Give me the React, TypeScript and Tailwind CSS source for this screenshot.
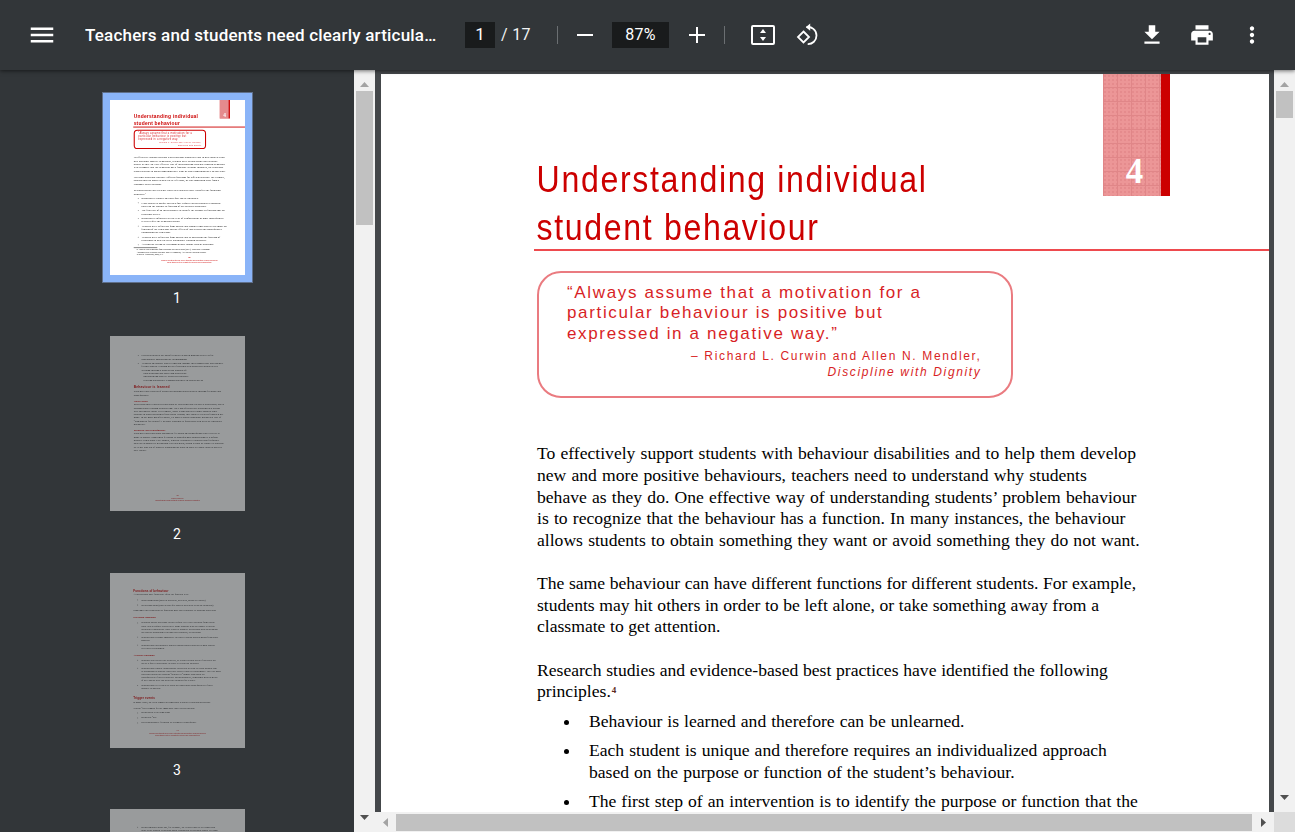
import React from "react";

const Ic = ({ d, cls }: { d: string; cls: string }) => (
  <svg viewBox="0 0 24 24" className={cls} fill="currentColor"><path d={d} /></svg>
);

const Bullets = ({ items, itemCls = "mb-[7.6px]" }: { items: React.ReactNode[]; itemCls?: string }) => (
  <ul>
    {items.map((t, i) => (
      <li key={i} className={`flex ${itemCls}`}>
        <span className="w-[52px] shrink-0 pl-[27px] pt-[9px]"><span className="block w-[5px] h-[5px] rounded-full bg-black" /></span>
        <span>{t}</span>
      </li>
    ))}
  </ul>
);

const Footer = ({ n, a, b }: { n: string; a: string; b: string }) => (
  <div className="text-center font-['Liberation_Sans',sans-serif] text-[#cc0000]">
    <div className="text-[16px] font-['Liberation_Serif',serif] font-bold leading-[20px]">{n}</div>
    <div className="text-[10px] leading-[13px] mt-[4px]">{a}</div>
    <div className="text-[10px] leading-[13px]">{b}</div>
  </div>
);

function PageOne({ thumb }: { thumb?: boolean }) {
  return (
    <div className="w-[888px] h-[1151px] bg-white font-['Liberation_Serif',serif] text-black overflow-hidden">
      <div className="flex justify-between h-[175px] ml-[153px]">
        <div className={thumb ? "pt-[82px] pl-[3px] font-['Liberation_Sans',sans-serif] font-bold text-[37px] leading-[48px] tracking-[1.9px] text-[#cc0000] whitespace-nowrap origin-left scale-x-[0.867]" : "pt-[82px] pl-[3px] font-['Liberation_Sans',sans-serif] text-[37px] leading-[48px] tracking-[1.9px] text-[#cc0000] whitespace-nowrap origin-left scale-x-[0.867]"}>
          Understanding individual<br />student behaviour
        </div>
        <div className="flex h-[122px] mr-[99px]">
          <div className="w-[58px] h-full flex items-end justify-center pb-[4px] pl-[5px] bg-[#ec9697] bg-[repeating-linear-gradient(0deg,#e08688_0,#e08688_1px,transparent_1px,transparent_14px),repeating-linear-gradient(90deg,#e08688_0,#e08688_1px,transparent_1px,transparent_14px),radial-gradient(circle,#e58b8d_0,#e58b8d_1px,transparent_1.5px)] bg-[length:14px_14px,14px_14px,4px_4px] text-white text-[35px] leading-[40px] font-bold">4</div>
          <div className="w-[9px] h-full bg-[#cc0000]" />
        </div>
      </div>
      <div className={thumb ? "ml-[153px] h-[6px] bg-[#cc0000]" : "ml-[153px] h-[2px] bg-[#ee4a4e]"} />
      <div className={thumb ? "ml-[156px] mt-[15px] w-[476px] h-[127px] rounded-[24px] border-[7px] border-[#cc0000] pt-[5px] pl-[23px] pr-[24px] font-['Liberation_Sans',sans-serif] text-[#d81f26]" : "ml-[156px] mt-[20px] w-[476px] h-[127px] rounded-[24px] border-2 border-[#ea7b80] pt-[9.5px] pl-[28px] pr-[29.5px] font-['Liberation_Sans',sans-serif] text-[#d81f26]"}>
        <div className="text-[17px] leading-[20.7px] tracking-[1.65px] whitespace-nowrap">
          “Always assume that a motivation for a<br />particular behaviour is positive but<br />expressed in a negative way.”
        </div>
        <div className="text-right text-[12px] leading-[16px] tracking-[1.65px] mt-[3.5px] whitespace-nowrap">
          – Richard L. Curwin and Allen N. Mendler,<br /><i>Discipline with Dignity</i>
        </div>
      </div>
      <div className="ml-[156px] mt-[45.3px] text-[17.6px] leading-[21.65px] whitespace-nowrap">
        <p className="[word-spacing:0.8px]">To effectively support students with behaviour disabilities and to help them develop<br />new and more positive behaviours, teachers need to understand why students<br />behave as they do. One effective way of understanding students’ problem behaviour<br />is to recognize that the behaviour has a function. In many instances, the behaviour<br />allows students to obtain something they want or avoid something they do not want.</p>
        <p className="mt-[21.6px] [word-spacing:0.2px]">The same behaviour can have different functions for different students. For example,<br />students may hit others in order to be left alone, or take something away from a<br />classmate to get attention.</p>
        <p className="mt-[21.6px] mb-[8px] [word-spacing:0.3px]">Research studies and evidence-based best practices have identified the following<br />principles.<sup className="text-[9px] font-bold text-[#5a2a20] leading-none ml-[1px]">4</sup></p>
        <div className="[word-spacing:0.6px]">
          <Bullets items={[
            "Behaviour is learned and therefore can be unlearned.",
            <>Each student is unique and therefore requires an individualized approach<br />based on the purpose or function of the student’s behaviour.</>,
            <>The first step of an intervention is to identify the purpose or function that the<br />behaviour serves.</>,
            <>Behaviour is influenced by the type of reinforcement or other consequences<br />received after the behaviour occurs.</>,
            <>Teachers need to find out from parents and school teams what to determine the<br />function of the behaviour and the effects of antecedents and consequences<br />surrounding the behaviour.</>,
            <>Teachers need to find out from parents and to understand the function of<br />behaviours in order to select appropriate teaching strategies.</>,
            "Altering the setting or environment may change student behaviour.",
          ]} />
        </div>
        <div className="w-[155px] h-[3px] bg-black mt-[1px]" />
        <div className="pl-[18px] text-[13px] leading-[15px] mt-[3px]">
          4. Adapted with permission from Education and Social Issues (2013). Behaviour: Classroom<br />Assessment and Teaching Strategies. 2nd ed. Edmonton, AB: Special Education Branch.<br />Teacher’s Association, 2002, p. 6.
        </div>
        <div className="mt-[5px]"><Footer n="26" a="Teachers and students need clearly articulated and sequentially planned behaviours" b="and all staff need to be consistent in applying and reinforcing them" /></div>
      </div>
    </div>
  );
}

function PageTwo() {
  return (
    <div className="w-[888px] h-[1151px] bg-white font-['Liberation_Serif',serif] text-black text-[17.4px] leading-[21.6px] whitespace-nowrap overflow-hidden pt-[118px] pl-[156px] flex flex-col">
      <Bullets items={[
        <>Data collection is the basis for initial decision-making as well as for<br />continuously monitoring the programming.</>,
        <>Teachers and school-based teams can enhance their competency and capacity<br />for meeting the learning needs of students with behaviour disabilities by<br />working through a process that consists of:<br />– understanding and observing behaviours<br />– implementing positive behaviour supports<br />– utilizing appropriate teaching strategies in student needs</>,
      ]} />
      <h3 className="text-[#cc0000] font-bold text-[22px] mt-[20px] mb-[7px] font-['Liberation_Sans',sans-serif] tracking-[1px]">Behaviour is learned</h3>
      <p>Students learn a pattern of behaviour through observation or through feedback and<br />consequences.</p>
      <h4 className="text-[#cc0000] font-bold mt-[20px]">Observation</h4>
      <p>Individuals may learn new behaviours by observing other people’s behaviours; this is<br />through social learning or modelling. They can often people behaving in a certain<br />way and imitate them. For example, Mary learns that her teacher accused other<br />students in class brawling in front social lessons; they showed it’s been forgotten her<br />home. In the more modified scene, Ed Mary’s parent encourage hitting as a way of<br />“standing up for yourself.” In Mary responds to frustration with peers by physically<br />hitting out.</p>
      <h4 className="text-[#cc0000] font-bold mt-[20px]">Feedback and consequences</h4>
      <p>Students learn behaviours through the feedback and consequences they receive at<br />home or school. Sometimes feedback or consequences unintentionally reinforce<br />negative behaviours. For example, when he responds to a student who frequently<br />calls out in school by giving him extra attention, which is what he wants. Or students<br />try to get sent out of class by disrupting the class in order to escape tasks or activity<br />they dislike.</p>
      <div className="mt-auto mb-[64px] -ml-[156px]"><Footer n="30" a="Teacher Resource" b="Understanding individual student behaviour: Behaviour Disabilities" /></div>
    </div>
  );
}

function PageThree() {
  return (
    <div className="w-[888px] h-[1151px] bg-white font-['Liberation_Serif',serif] text-black text-[16.5px] leading-[20px] whitespace-nowrap overflow-hidden pt-[105px] pl-[153px] flex flex-col">
      <h3 className="text-[#cc0000] font-bold text-[20px] leading-[24px] font-['Liberation_Sans',sans-serif] tracking-[0.5px]">Functions of behaviour</h3>
      <p className="mt-[4px] mb-[13px]">All behaviours have functions. Often the function is to:</p>
      <Bullets itemCls="mb-[13px]" items={["obtain something (such as attention, activities, goods or control)", "avoid something (such as specific tasks or activities or social situations)"]} />
      <p className="mt-[6px]">Sometimes two behaviours or functions may also contribute to problem behaviour.</p>
      <h4 className="text-[#cc0000] font-bold mt-[26px] mb-[13px]">Obtaining something</h4>
      <Bullets itemCls="mb-[13px]" items={[
        <>Research shows that some people require very little attention from others<br />while others require a great deal. Some students who are unable to obtain<br />attention in appropriate ways resort to negative behaviours such as speaking<br />out loud or disrupting or hitting other students, or swearing.</>,
        <>Students may become aggressive in order to obtain desired goods from other<br />students.</>,
        <>Students may intentionally display oppositional behaviour to gain control<br />over their environment.</>,
      ]} />
      <h4 className="text-[#cc0000] font-bold mt-[13px] mb-[13px]">Avoiding something</h4>
      <Bullets itemCls="mb-[13px]" items={[
        <>Students who do not like activities, or certain certain types of activities act<br />out or refuse to participate in order to avoid that situation.</>,
        <>Students may display inappropriate behaviour in class to avoid doing a task<br />or attempting to practise when they know it may be problematic. They are more<br />concerned about not looking “stupid” or “dumb” than about the<br />consequences of their behaviour. Being disruptive, sometimes gets them out<br />of the class so they can avoid the situation for a while.</>,
        <>Students may lie or cheat to avoid the unpleasant consequences of their<br />negative behaviour.</>,
      ]} />
      <h3 className="text-[#cc0000] font-bold text-[20px] leading-[24px] mt-[30px] font-['Liberation_Sans',sans-serif] tracking-[0.5px]">Trigger events</h3>
      <p className="mt-[4px] mb-[24px]">In many cases, an event triggers an emotional reaction or problem behaviour.</p>
      <p className="mb-[6px]">Typical “hot” triggers for the immediate and external include:</p>
      <Bullets itemCls="mb-[13px]" items={["being asked to do something", "being told “no”", "receiving negative feedback or a negative consequence"]} />
      <div className="mt-[16px] -ml-[153px]"><Footer n="31" a="Teachers and students need clearly articulated and sequentially planned behaviours" b="and all staff need to be consistent in applying and reinforcing them" /></div>
    </div>
  );
}

function PageFour() {
  return (
    <div className="w-[888px] h-[1151px] bg-white font-['Liberation_Serif',serif] text-black text-[16.5px] leading-[20px] whitespace-nowrap overflow-hidden pt-[108px] pl-[153px]">
      <Bullets items={[<>being reminded about any, for example, the teacher asks to see homework<br />done or the student is anxious about reading out or having a school is a large</>]} />
    </div>
  );
}

const Thumb = ({ n, active, children }: { n: number; active?: boolean; children: React.ReactNode }) => (
  <div className="h-[236.5px] shrink-0 flex flex-col items-center">
    <div className={active ? "p-[7px] -mt-[8px] bg-[#8ab4f8] border border-[#5f6f8a]" : ""}>
      <div className={active ? "w-[135px] h-[175px] overflow-hidden bg-white" : "w-[135px] h-[175px] overflow-hidden bg-white opacity-50"}>
        <div className="origin-top-left scale-[0.152] blur-[1.2px] w-[888px]">{children}</div>
      </div>
    </div>
    <div className={active ? "mt-[5px] text-[14px] leading-[20px] text-white" : "mt-[12.5px] text-[14px] leading-[20px] text-white"}>{n}</div>
  </div>
);

const UpArrow = () => (
  <svg width="9" height="5" viewBox="0 0 9 5" fill="#a3a3a3"><path d="M4.5 0L9 5H0z" /></svg>
);
const DownArrow = () => (
  <svg width="9" height="5" viewBox="0 0 9 5" fill="#505050"><path d="M0 0h9L4.5 5z" /></svg>
);

const VScroll = ({ thumb }: { thumb: string }) => (
  <div className="w-[21px] shrink-0 h-full bg-[#f1f1f1] flex flex-col items-center">
    <div className="h-[21px] shrink-0 flex items-end justify-center pb-[4px]"><UpArrow /></div>
    <div className={`w-[17px] shrink-0 bg-[#c1c1c1] ${thumb}`} />
    <div className="mt-auto h-[23px] shrink-0 flex items-start justify-center pt-[6px]"><DownArrow /></div>
  </div>
);

export default function App() {
  return (
    <div className="h-screen w-full flex flex-col overflow-hidden bg-[#323639] font-['Roboto',sans-serif] text-white">
      <header className="relative z-10 h-[70px] shrink-0 bg-[#323639] shadow-[0_1px_4px_rgba(0,0,0,0.55)] flex items-center">
        <Ic cls="w-[30px] h-[30px] ml-[27px]" d="M3 18h18v-2H3v2zm0-5h18v-2H3v2zm0-7v2h18V6H3z" />
        <div className="ml-[28px] w-[352px] truncate text-[17px] font-medium tracking-[0.2px] leading-[24px]">Teachers and students need clearly articulated</div>
        <div className="ml-[28px] w-[30px] h-[26px] bg-[#191b1c] flex items-center justify-center text-[17px]">1</div>
        <div className="ml-[6px] w-[30px] text-[16px] tracking-[0.3px] whitespace-nowrap text-[#f1f3f4]">/ 17</div>
        <div className="ml-[26px] w-px h-[18px] bg-[#6b6f72]" />
        <div className="ml-[19px] w-[16px] h-[2px] bg-white" />
        <div className="ml-[19px] w-[57px] h-[26px] bg-[#191b1c] flex items-center justify-center text-[16px] tracking-[0.2px]">87%</div>
        <svg className="ml-[20px] w-[16px] h-[16px]" viewBox="0 0 16 16" fill="#fff"><path d="M7 0h2v7h7v2H9v7H7V9H0V7h7z" /></svg>
        <div className="ml-[19px] w-px h-[18px] bg-[#6b6f72]" />
        <svg className="ml-[26px] w-[24px] h-[20px]" viewBox="0 0 24 20" fill="none">
          <rect x="1" y="1" width="22" height="18" rx="1" stroke="#fff" strokeWidth="2" />
          <path d="M12 4l3 4H9zM12 16l-3-4h6z" fill="#fff" />
        </svg>
        <svg className="ml-[21px] w-[24px] h-[24px]" viewBox="0 0 24 24" fill="none" stroke="#fff" strokeWidth="1.8">
          <path d="M7.5 8.5l5.5 5.5-5.5 5.5L2 14z" />
          <path d="M10.5 4.2c5-1 10 2.6 10 8.3 0 5-4 8.8-8.8 8.6" />
          <path d="M14.2 0.6L9.8 4.2l4.4 3.6z" fill="#fff" stroke="none" />
        </svg>
        <Ic cls="ml-auto w-[26px] h-[26px] mr-[24px]" d="M19 9h-4V3H9v6H5l7 7 7-7zM5 18v2h14v-2H5z" />
        <Ic cls="w-[26px] h-[26px] mr-[24px]" d="M19 8H5c-1.66 0-3 1.34-3 3v6h4v4h12v-4h4v-6c0-1.66-1.34-3-3-3zm-3 11H8v-5h8v5zm3-7c-.55 0-1-.45-1-1s.45-1 1-1 1 .45 1 1-.45 1-1 1zm-1-9H6v4h12V3z" />
        <Ic cls="w-[26px] h-[26px] mr-[30px]" d="M12 8c1.1 0 2-.9 2-2s-.9-2-2-2-2 .9-2 2 .9 2 2 2zm0 2c-1.1 0-2 .9-2 2s.9 2 2 2 2-.9 2-2-.9-2-2-2zm0 6c-1.1 0-2 .9-2 2s.9 2 2 2 2-.9 2-2-.9-2-2-2z" />
      </header>
      <div className="flex-1 min-h-0 flex">
        <aside className="w-[354px] shrink-0 pt-[29.6px] flex flex-col overflow-hidden">
          <Thumb n={1} active><PageOne thumb /></Thumb>
          <Thumb n={2}><PageTwo /></Thumb>
          <Thumb n={3}><PageThree /></Thumb>
          <Thumb n={4}><PageFour /></Thumb>
        </aside>
        <VScroll thumb="h-[134px]" />
        <div className="flex-1 min-w-0 flex flex-col">
          <div className="flex-1 min-h-0 flex">
            <div className="flex-1 min-w-0 bg-[#44474a] pt-[4px] pl-[6px] pr-[5px] overflow-hidden">
              <PageOne />
            </div>
            <VScroll thumb="h-[27px]" />
          </div>
          <div className="h-[20px] shrink-0 flex bg-[#f1f1f1]">
            <div className="w-[21px] shrink-0 flex items-center justify-center">
              <svg width="5" height="9" viewBox="0 0 5 9" fill="#a3a3a3"><path d="M5 0v9L0 4.5z" /></svg>
            </div>
            <div className="w-[856px] h-[17px] mt-[2px] bg-[#c1c1c1]" />
            <div className="flex-1 flex items-center justify-center">
              <svg width="5" height="9" viewBox="0 0 5 9" fill="#505050"><path d="M0 0v9l5-4.5z" /></svg>
            </div>
            <div className="w-[21px] shrink-0 bg-[#dcdcdc]" />
          </div>
        </div>
      </div>
    </div>
  );
}
